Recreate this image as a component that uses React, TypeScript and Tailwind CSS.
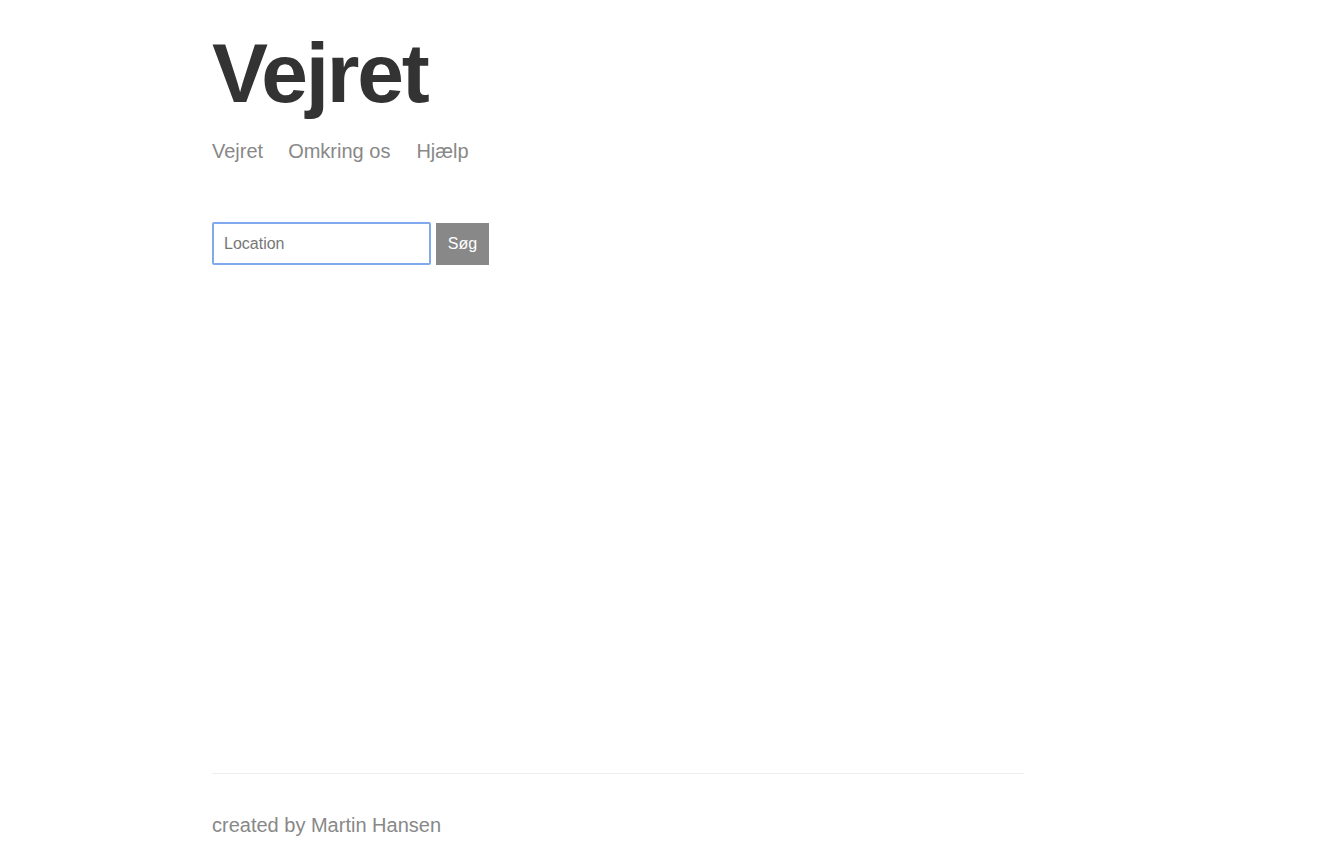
import React from "react";

export default function App() {
  return (
    <div className="min-h-screen bg-white" style={{ fontFamily: '"Liberation Sans", Arial, sans-serif' }}>
      <div className="ml-[212px] w-[812px] flex flex-col">
        <h1 className="mt-[31px] h-[84px] leading-[84px] text-[84px] font-bold text-[#333333] tracking-[-2.2px]">
          Vejret
        </h1>
        <nav className="mt-[26px] flex h-[20px] leading-[20px] text-[20px] text-[#888888]">
          <a>Vejret</a>
          <a className="ml-[25px]">Omkring os</a>
          <a className="ml-[26px]">Hjælp</a>
        </nav>
        <form className="mt-[61px] flex gap-[5px] h-[43px]" onSubmit={(e) => e.preventDefault()}>
          <input
            placeholder="Location"
            className="w-[219px] h-[43px] border-2 border-[#80a9ee] rounded-[2px] px-[10px] text-[16px] text-[#333] placeholder:text-[#777777] outline-none"
          />
          <button className="mt-[1px] w-[53px] h-[42px] bg-[#888888] text-white text-[16px]">Søg</button>
        </form>
        <div className="mt-[508px] border-t border-[#eeeeee]" />
        <footer className="mt-[41px] h-[20px] leading-[20px] text-[20px] text-[#888888]">
          created by Martin Hansen
        </footer>
      </div>
    </div>
  );
}
